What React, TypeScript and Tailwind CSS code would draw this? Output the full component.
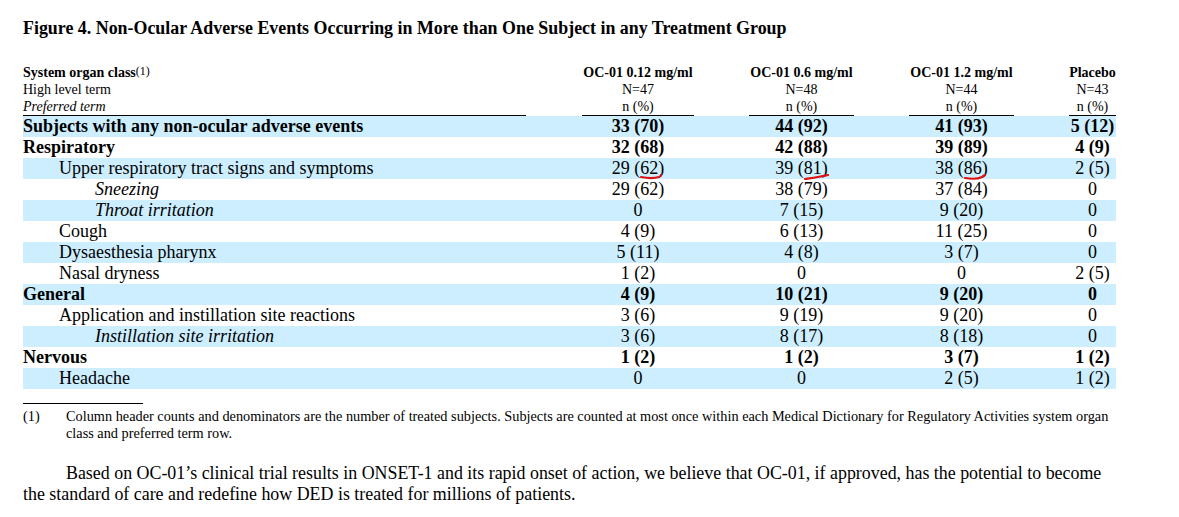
import React from 'react';

type Row = { label: string; level: 0 | 1 | 2; v: string[]; marks?: boolean };

const rows: Row[] = [
  { label: 'Subjects with any non-ocular adverse events', level: 0, v: ['33 (70)', '44 (92)', '41 (93)', '5 (12)'] },
  { label: 'Respiratory', level: 0, v: ['32 (68)', '42 (88)', '39 (89)', '4 (9)'] },
  { label: 'Upper respiratory tract signs and symptoms', level: 1, v: ['29 (62)', '39 (81)', '38 (86)', '2 (5)'], marks: true },
  { label: 'Sneezing', level: 2, v: ['29 (62)', '38 (79)', '37 (84)', '0'] },
  { label: 'Throat irritation', level: 2, v: ['0', '7 (15)', '9 (20)', '0'] },
  { label: 'Cough', level: 1, v: ['4 (9)', '6 (13)', '11 (25)', '0'] },
  { label: 'Dysaesthesia pharynx', level: 1, v: ['5 (11)', '4 (8)', '3 (7)', '0'] },
  { label: 'Nasal dryness', level: 1, v: ['1 (2)', '0', '0', '2 (5)'] },
  { label: 'General', level: 0, v: ['4 (9)', '10 (21)', '9 (20)', '0'] },
  { label: 'Application and instillation site reactions', level: 1, v: ['3 (6)', '9 (19)', '9 (20)', '0'] },
  { label: 'Instillation site irritation', level: 2, v: ['3 (6)', '8 (17)', '8 (18)', '0'] },
  { label: 'Nervous', level: 0, v: ['1 (2)', '1 (2)', '3 (7)', '1 (2)'] },
  { label: 'Headache', level: 1, v: ['0', '0', '2 (5)', '1 (2)'] },
];

const grid = 'grid grid-cols-[503px_56px_112px_55px_105px_55px_105px_55px_47px]';

const marks = [
  'M1 3 C6 4, 14 4.5, 19 3 C20 2.5, 21 1.5, 21 1',
  'M1 5 C8 4, 16 3, 24 1',
  'M1 4 C7 5, 14 5, 18 3 C19 2, 20 1.5, 21 1',
];

function Value({ text, mark }: { text: string; mark?: number }) {
  if (mark === undefined) return <>{text}</>;
  const m = text.match(/^(\d+) \((\d+)\)$/);
  if (!m) return <>{text}</>;
  return (
    <>
      {m[1]}&nbsp;(
      <span className="relative">
        {m[2]}
        <svg className="absolute left-[0px] top-[16px]" width="26" height="7" viewBox="0 0 26 7">
          <path d={marks[mark]} fill="none" stroke="#e01010" strokeWidth="2.2" strokeLinecap="round" />
        </svg>
      </span>
      )
    </>
  );
}

export default function App() {
  return (
    <div className="w-[1179px] h-[517px] bg-white text-black overflow-hidden pl-[23px] pt-[18px]" style={{ fontFamily: '"Liberation Serif", "Times New Roman", serif' }}>
      <h1 className="text-[17.9px] font-bold leading-[20px] h-[20px] whitespace-nowrap">
        Figure 4. Non-Ocular Adverse Events Occurring in More than One Subject in any Treatment Group
      </h1>
      <div className="mt-[26px] w-[1093px]">
        <div className={`${grid} text-[14px] leading-[17px]`}>
          <div className="border-b border-black">
            <div className="font-bold">System organ class<span className="text-[12px] font-normal align-top relative top-[-1px]">(1)</span></div>
            <div>High level term</div>
            <div className="italic">Preferred term</div>
          </div>
          <div />
          {[
            ['OC-01 0.12 mg/ml', 'N=47'],
            ['OC-01 0.6 mg/ml', 'N=48'],
            ['OC-01 1.2 mg/ml', 'N=44'],
            ['Placebo', 'N=43'],
          ].map((h, i) => (
            <React.Fragment key={i}>
              <div className="border-b border-black flex flex-col items-center whitespace-nowrap">
                <div className="font-bold">{h[0]}</div>
                <div>{h[1]}</div>
                <div>n (%)</div>
              </div>
              {i < 3 && <div />}
            </React.Fragment>
          ))}
        </div>
        {rows.map((r, ri) => (
          <div
            key={ri}
            className={`${grid} h-[21px] items-center text-[18px] leading-[21px] ${ri % 2 === 0 ? 'bg-[#cceeff]' : ''} ${r.level === 0 ? 'font-bold' : ''}`}
          >
            <div
              className={`whitespace-nowrap ${r.level === 1 ? 'pl-[36px]' : ''} ${r.level === 2 ? 'pl-[72px] italic' : ''}`}
            >
              {r.label}
            </div>
            <div />
            {r.v.map((v, vi) => (
              <React.Fragment key={vi}>
                <div className="flex justify-center whitespace-nowrap">
                  <span>
                    <Value text={v} mark={r.marks && vi < 3 ? vi : undefined} />
                  </span>
                </div>
                {vi < 3 && <div />}
              </React.Fragment>
            ))}
          </div>
        ))}
      </div>
      <div className="mt-[14px] w-[120px] border-t border-black" />
      <div className="flex text-[14.3px] leading-[17px] mt-[4px] w-[1093px]">
        <div className="w-[43px] shrink-0">(1)</div>
        <div className="w-[1050px]">
          Column header counts and denominators are the number of treated subjects. Subjects are counted at most once within each Medical Dictionary for Regulatory Activities system organ class and preferred term row.
        </div>
      </div>
      <p className="mt-[21px] text-[17.9px] leading-[21px] w-[1090px] indent-[43px]">
        Based on OC-01’s clinical trial results in ONSET-1 and its rapid onset of action, we believe that OC-01, if approved, has the potential to become the standard of care and redefine how DED is treated for millions of patients.
      </p>
    </div>
  );
}
